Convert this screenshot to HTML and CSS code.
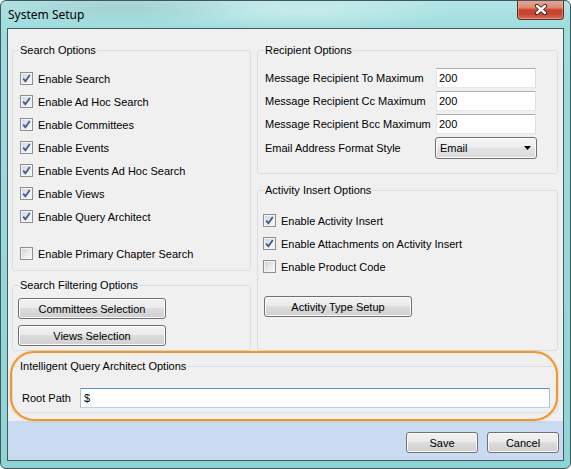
FILE: index.html
```html
<!DOCTYPE html>
<html lang="en">
<head>
  <meta charset="UTF-8">
  <title>System Setup</title>
  <link rel="stylesheet" href="styles.css">
</head>
<body>

  <div class="window">
    <div class="titlebar">
      <span class="title">System Setup</span>
      <div class="close-button">
        <svg width="14" height="11" viewBox="0 0 14 11">
          <path d="M3 2 L11 9 M11 2 L3 9" stroke="#3b1c16" stroke-width="4.2" stroke-linecap="round" fill="none"/>
          <path d="M3 2 L11 9 M11 2 L3 9" stroke="#ffffff" stroke-width="2.4" stroke-linecap="round" fill="none"/>
        </svg>
      </div>
    </div>

    <div class="client">
      <div class="columns">
        <div class="col">
          <fieldset class="group search-options">
            <legend>Search Options</legend>
            <div class="check"><span class="box on"></span>Enable Search</div>
            <div class="check"><span class="box on"></span>Enable Ad Hoc Search</div>
            <div class="check"><span class="box on"></span>Enable Committees</div>
            <div class="check"><span class="box on"></span>Enable Events</div>
            <div class="check"><span class="box on"></span>Enable Events Ad Hoc Search</div>
            <div class="check"><span class="box on"></span>Enable Views</div>
            <div class="check"><span class="box on"></span>Enable Query Architect</div>
            <div class="spacer"></div>
            <div class="check"><span class="box"></span>Enable Primary Chapter Search</div>
          </fieldset>

          <fieldset class="group filter-options">
            <legend>Search Filtering Options</legend>
            <button class="btn wide">Committees Selection</button>
            <button class="btn wide">Views Selection</button>
          </fieldset>
        </div>

        <div class="col">
          <fieldset class="group recipient-options">
            <legend>Recipient Options</legend>
            <div class="field"><span class="field-label">Message Recipient To Maximum</span><input class="textbox" type="text" value="200"></div>
            <div class="field"><span class="field-label">Message Recipient Cc Maximum</span><input class="textbox" type="text" value="200"></div>
            <div class="field"><span class="field-label">Message Recipient Bcc Maximum</span><input class="textbox" type="text" value="200"></div>
            <div class="field combo-row">
              <span class="field-label">Email Address Format Style</span>
              <div class="combo">
                <span>Email</span>
                <svg class="combo-arrow" width="7" height="4" viewBox="0 0 7 4"><polygon points="0,0 7,0 3.5,4" fill="#000"/></svg>
              </div>
            </div>
          </fieldset>

          <fieldset class="group activity-options">
            <legend>Activity Insert Options</legend>
            <div class="check"><span class="box on"></span>Enable Activity Insert</div>
            <div class="check"><span class="box on"></span>Enable Attachments on Activity Insert</div>
            <div class="check"><span class="box"></span>Enable Product Code</div>
            <button class="btn wide">Activity Type Setup</button>
          </fieldset>
        </div>
      </div>

      <fieldset class="group iqa-options">
        <legend>Intelligent Query Architect Options</legend>
        <div class="root-row">
          <span class="root-label">Root Path</span>
          <input class="textbox root-input" type="text" value="$">
        </div>
      </fieldset>

      <div class="footer">
        <button class="btn small">Save</button>
        <button class="btn small">Cancel</button>
      </div>

      <div class="callout"></div>
    </div>
  </div>

</body>
</html>
```

FILE: styles.css
```css
body {
  margin: 0;
  background: #ffffff;
}
.window {
  width: 571px;
  height: 469px;
  box-sizing: border-box;
  border: 1px solid #42565c;
  border-radius: 6px;
  background:
    radial-gradient(ellipse 140px 18px at 120px 6px, rgba(150, 175, 180, 0.35), transparent),
    radial-gradient(ellipse 160px 22px at 300px 10px, rgba(255, 255, 255, 0.35), transparent),
    linear-gradient(180deg, #b2e5e6 0px, #9edcdd 28px, #8fd4d5 100%);
  display: flex;
  flex-direction: column;
  overflow: hidden;
  font-family: "Liberation Sans", Arial, sans-serif;
  font-size: 11px;
  color: #000;
}
.titlebar {
  height: 27px;
  display: flex;
  align-items: flex-start;
  flex-shrink: 0;
}
.title {
  font-family: "Noto Sans", "Liberation Sans", sans-serif;
  font-size: 12px;
  line-height: 16px;
  padding: 6px 0 0 7px;
  color: #000;
}
.close-button {
  margin-left: auto;
  margin-right: 6px;
  margin-top: -1px;
  width: 47px;
  height: 20px;
  box-sizing: border-box;
  border: 1px solid #5e2b22;
  border-top: none;
  border-radius: 0 0 4px 4px;
  background: linear-gradient(180deg, #e9a898 0%, #dc8a74 40%, #c7442e 52%, #c44431 75%, #dc7458 100%);
  box-shadow: inset 0 0 0 1px rgba(255, 220, 210, 0.35);
  display: flex;
  align-items: center;
  justify-content: center;
}
.client {
  margin: 0 6px 7px;
  border: 1px solid #46585f;
  background: #f0f0f0;
  flex: 1;
  display: flex;
  flex-direction: column;
  position: relative;
}
.columns {
  display: grid;
  grid-template-columns: 239px 301px;
  column-gap: 6px;
  padding: 15px 5px 0 4px;
}
.col {
  display: flex;
  flex-direction: column;
}
.group {
  margin: 0;
  border: 1px solid #d5dfe5;
  border-radius: 3px;
  padding: 0 7px;
  min-width: 0;
}
.group legend {
  padding: 0 1px;
  margin-left: -1px;
  font-size: 11px;
  line-height: 13px;
}
.search-options {
  padding-top: 10px;
  padding-bottom: 5px;
}
.filter-options {
  margin-top: 8px;
  padding-top: 6px;
  padding-bottom: 4px;
  flex: 1;
}
.filter-options .btn {
  margin-left: -2px;
}
.filter-options .btn + .btn {
  margin-top: 6px;
}
.recipient-options {
  padding-top: 11px;
  padding-bottom: 14px;
}
.activity-options {
  margin-top: 10px;
  padding-top: 12px;
  flex: 1;
}
.activity-options .check {
  margin-left: -2px;
}
.activity-options .btn {
  margin-top: 18px;
  margin-left: -1px;
}
.check {
  display: flex;
  align-items: center;
  height: 23px;
  white-space: nowrap;
}
.spacer {
  height: 14px;
}
.box {
  width: 13px;
  height: 13px;
  box-sizing: border-box;
  border: 1px solid #8e8f8f;
  background: linear-gradient(135deg, #cdd1d6 0%, #eceef0 60%, #f8f8f8 100%);
  box-shadow: inset 0 0 0 1px #f4f4f4;
  margin-right: 5px;
  flex-shrink: 0;
}
.box.on {
  background:
    url("data:image/svg+xml;utf8,<svg xmlns='http://www.w3.org/2000/svg' width='11' height='11' viewBox='0 0 11 11'><path d='M2.2 5.6 L4.4 8.2 L8.8 2' stroke='%23435a8e' stroke-width='1.8' fill='none'/></svg>") center / 11px 11px no-repeat,
    linear-gradient(135deg, #cdd1d6 0%, #eceef0 60%, #f8f8f8 100%);
}
.btn {
  display: block;
  height: 21px;
  box-sizing: border-box;
  border: 1px solid #707070;
  border-radius: 3px;
  background: linear-gradient(180deg, #f2f2f2 0%, #ebebeb 45%, #dddddd 50%, #cfcfcf 100%);
  box-shadow: inset 0 0 0 1px #fbfbfb;
  font-family: "Liberation Sans", Arial, sans-serif;
  font-size: 11px;
  color: #000;
  padding: 0;
}
.btn.wide {
  width: 148px;
}
.btn.small {
  width: 72px;
}
.field {
  display: flex;
  align-items: center;
  height: 20px;
  margin-bottom: 3px;
}
.field.combo-row {
  height: 22px;
  margin-top: 2px;
  margin-bottom: 0;
}
.field-label {
  width: 171px;
  flex-shrink: 0;
  white-space: nowrap;
}
.textbox {
  width: 100px;
  height: 20px;
  box-sizing: border-box;
  border: 1px solid;
  border-color: #abadb3 #dbdfe6 #e3e9ef #e2e3ea;
  background: #fff;
  padding: 0 2px;
  margin: 0;
  font-family: "Liberation Sans", Arial, sans-serif;
  font-size: 11px;
  color: #000;
  outline: none;
}
.combo {
  width: 102px;
  height: 22px;
  box-sizing: border-box;
  margin-left: -1px;
  border: 1px solid #707070;
  border-radius: 3px;
  background: linear-gradient(180deg, #f6f6f6 0%, #eeeeee 45%, #e3e3e3 50%, #dadada 100%);
  box-shadow: inset 0 0 0 1px #fbfbfb;
  display: flex;
  align-items: center;
  padding: 0 4px 0 4px;
}
.combo span {
  flex: 1;
}
.combo-arrow {
  margin-right: 1px;
}
.iqa-options {
  margin: 9px 5px 0 4px;
  padding-top: 15px;
  padding-bottom: 4px;
}
.root-row {
  display: flex;
  align-items: center;
  height: 20px;
  margin-left: 2px;
}
.root-label {
  width: 58px;
  flex-shrink: 0;
}
.root-input {
  width: 470px;
  padding-left: 3px;
  border-color: #5d8fc0 #a3c3e2 #b5d3ec #a3c3e2;
}
.footer {
  margin-top: 8px;
  flex: 1;
  background: #c9daf1;
  display: flex;
  justify-content: flex-end;
  align-items: flex-start;
  gap: 9px;
  padding: 11px 4px 0 0;
}
.callout {
  position: absolute;
  left: 2px;
  top: 322px;
  width: 548px;
  height: 70px;
  box-sizing: border-box;
  border: 2px solid #f2952c;
  border-radius: 24px;
  box-shadow: 0 0 2px rgba(242, 149, 44, 0.6);
  pointer-events: none;
}
```
